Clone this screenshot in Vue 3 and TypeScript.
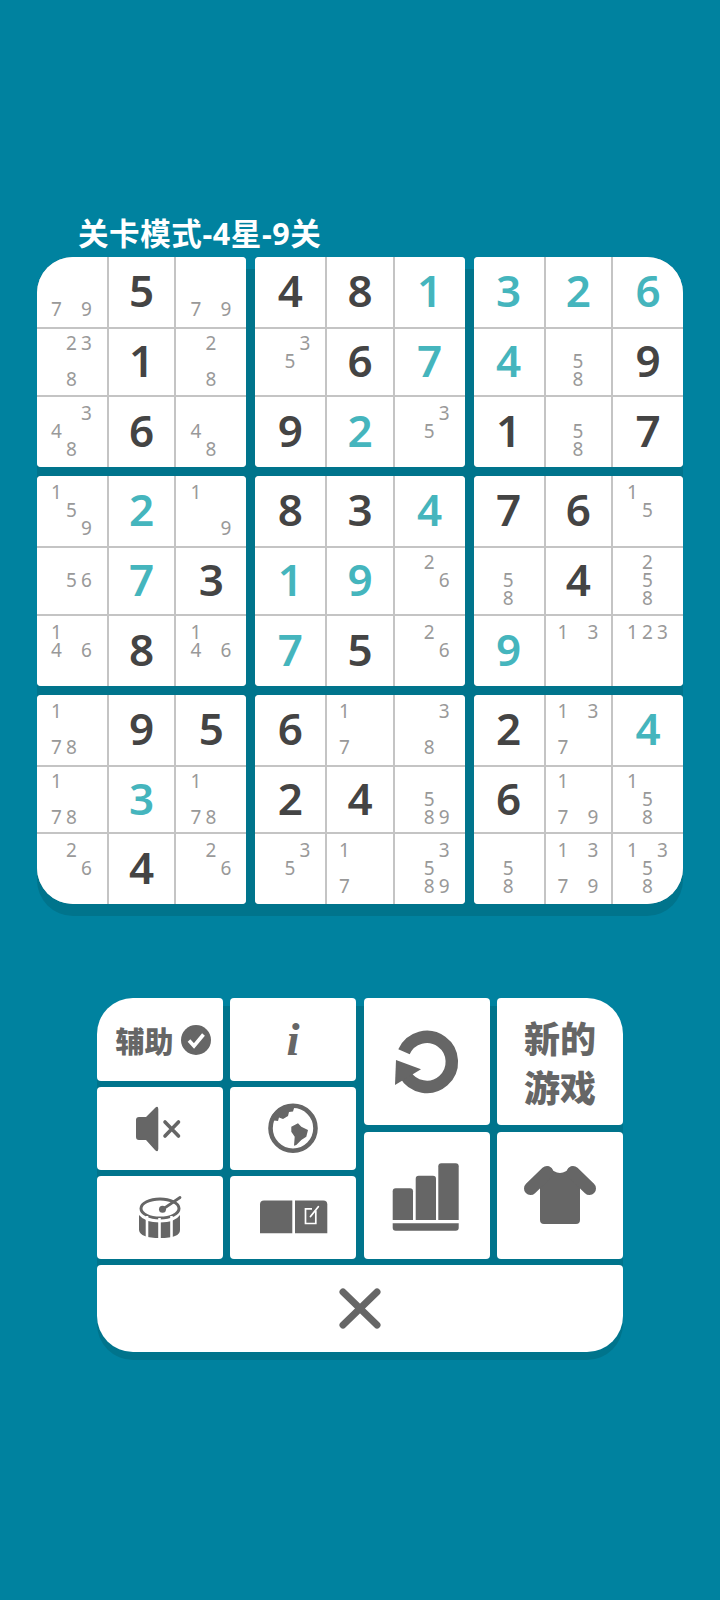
<script setup lang="ts">
const rows: string[] = [
  'n79 5 n79 4 8 t1 t3 t2 t6',
  'n238 1 n28 n35 6 t7 t4 n58 9',
  'n348 6 n48 9 t2 n35 1 n58 7',
  'n159 t2 n19 8 3 t4 7 6 n15',
  'n56 t7 3 t1 t9 n26 n58 4 n258',
  'n146 8 n146 t7 5 n26 t9 n13 n123',
  'n178 9 5 6 n17 n38 2 n137 t4',
  'n178 t3 n178 2 4 n589 6 n179 n158',
  'n26 4 n26 n35 n17 n3589 n58 n1379 n1358',
]
const grid: string[][] = rows.map((r) => r.split(' '))

interface Cell { kind: string; value: string; notes: (string | null)[] }

function parse(raw: string): Cell {
  if (raw[0] === 'n') {
    const notes: (string | null)[] = []
    for (let d = 1; d <= 9; d++) notes.push(raw.includes(String(d)) ? String(d) : null)
    return { kind: 'note', value: '', notes }
  }
  if (raw[0] === 't') return { kind: 'given', value: raw.slice(1), notes: [] }
  return { kind: 'solved', value: raw, notes: [] }
}

const blocks: Cell[][] = []
for (let br = 0; br < 3; br++) {
  for (let bc = 0; bc < 3; bc++) {
    const cells: Cell[] = []
    for (let r = 0; r < 3; r++) {
      for (let c = 0; c < 3; c++) cells.push(parse(grid[br * 3 + r][bc * 3 + c]))
    }
    blocks.push(cells)
  }
}
</script>

<template>
  <div class="page">
    <div class="title">关卡模式-4星-9关</div>
    <div class="board">
      <div v-for="(block, bi) in blocks" :key="bi" class="block" :class="'b' + bi">
        <div v-for="(cell, ci) in block" :key="ci" class="cell">
          <div v-if="cell.kind === 'note'" class="notes">
            <span v-for="(n, ni) in cell.notes" :key="ni" class="note">{{ n }}</span>
          </div>
          <span v-else class="digit" :class="cell.kind">{{ cell.value }}</span>
        </div>
      </div>
    </div>

    <div class="panel">
      <div class="top">
        <div class="small">
          <div class="btn tl assist">
            <span class="assist-label">辅助</span>
            <svg class="check" viewBox="0 0 30 30" width="30" height="30">
              <circle cx="15" cy="15" r="15" fill="#666" />
              <path d="M8 15.500 L13 21 L22.500 9.500" fill="none" stroke="#fff" stroke-width="3.600" />
            </svg>
          </div>
          <div class="btn"><span class="info">i</span></div>
          <div class="btn">
            <svg class="icon" viewBox="97 1087 126 83">
              <path d="M136 1120 Q136 1117 139 1117 H146 L155 1108 Q158 1105 158.300 1109 V1149 Q158 1153 155 1150 L146 1140 H139 Q136 1140 136 1137 Z" fill="#666" />
              <path d="M165 1122 L178.500 1136 M178.500 1122 L165 1136" stroke="#666" stroke-width="3.600" stroke-linecap="round" />
            </svg>
          </div>
          <div class="btn">
            <svg class="icon" viewBox="230 1087 126 83">
              <circle cx="293" cy="1128.300" r="22.500" fill="none" stroke="#666" stroke-width="4.600" />
              <path d="M270 1120 L278 1121 L279 1117.500 L283 1119 L288 1116 L289 1112 L293 1111.500 L295 1105 A23 23 0 0 0 270 1120 Z" fill="#666" />
              <path d="M291.300 1126.700 L298 1123.300 L301.300 1126.700 L308 1130 L306.300 1136.700 L301.300 1140 L296.300 1145 L294 1145.700 L294.700 1136.700 L291.300 1131.700 Z" fill="#666" />
            </svg>
          </div>
          <div class="btn">
            <svg class="icon" viewBox="97 1176 126 83">
              <ellipse cx="160" cy="1208.500" rx="19" ry="9.500" fill="none" stroke="#666" stroke-width="3" />
              <path d="M139 1215 V1230 Q140 1238 160 1238 Q180 1238 180 1230 V1215 Q175 1222.500 160 1222.500 Q145 1222.500 139 1215 Z" fill="#666" />
              <path d="M147 1216 V1240 M159.500 1218 V1240 M171.500 1216 V1240" stroke="#fff" stroke-width="2.600" />
              <path d="M162.500 1209.300 L180 1197.500" stroke="#666" stroke-width="2.800" stroke-linecap="round" />
              <circle cx="162.500" cy="1209.300" r="3.500" fill="#666" />
            </svg>
          </div>
          <div class="btn">
            <svg class="icon" viewBox="230 1176 126 83">
              <path d="M260 1204.500 Q260 1200.500 264 1200.500 H292.300 V1233.300 H260 Z" fill="#666" />
              <path d="M295 1200.500 H323.300 Q327.300 1200.500 327.300 1204.500 V1233.300 H295 Z" fill="#666" />
              <path d="M315.800 1210.500 V1223.500 H305.500 V1208.800 H312" fill="none" stroke="#fff" stroke-width="1.700" />
              <path d="M310.500 1216.500 L318.300 1206.700" stroke="#fff" stroke-width="1.800" stroke-linecap="round" />
            </svg>
          </div>
        </div>
        <div class="large">
          <div class="btn">
            <svg class="icon" viewBox="364 998 126 127">
              <path d="M404 1051.700 A25 25 0 1 1 405 1074" fill="none" stroke="#666" stroke-width="12.500" />
              <path d="M396 1060 L421 1069.300 L395 1085 Z" fill="#666" />
            </svg>
          </div>
          <div class="btn tr newgame">新的<br />游戏</div>
          <div class="btn">
            <svg class="icon" viewBox="364 1132 126 127">
              <path d="M392.700 1220 V1191.300 Q392.700 1188.300 395.700 1188.300 H410 Q413 1188.300 413 1191.300 V1220 Z" fill="#666" />
              <path d="M415.700 1220 V1178.700 Q415.700 1175.700 418.700 1175.700 H433 Q436 1175.700 436 1178.700 V1220 Z" fill="#666" />
              <path d="M438.300 1220 V1166.300 Q438.300 1163.300 441.300 1163.300 H455.700 Q458.700 1163.300 458.700 1166.300 V1220 Z" fill="#666" />
              <path d="M392.700 1223.300 H458.700 V1227.700 Q458.700 1230.700 455.700 1230.700 H395.700 Q392.700 1230.700 392.700 1227.700 Z" fill="#666" />
            </svg>
          </div>
          <div class="btn">
            <svg class="icon" viewBox="497 1132 126 127">
              <path d="M540 1220 V1175 L548 1166 Q560 1180 572 1166 L580 1175 V1220 Q580 1224 576 1224 H544 Q540 1224 540 1220 Z" fill="#666" />
              <path d="M530.500 1188.500 L547 1172.500 M589.500 1188.500 L573 1172.500" stroke="#666" stroke-width="13" stroke-linecap="round" />
            </svg>
          </div>
        </div>
      </div>
      <div class="btn close">
        <svg class="icon" viewBox="97 1265 526 87">
          <path d="M343 1292 L377 1325 M377 1292 L343 1325" stroke="#666" stroke-width="7" stroke-linecap="round" />
        </svg>
      </div>
    </div>
  </div>
</template>

<style>
html,
body {
  margin: 0;
  background: #00829f;
}
</style>

<style scoped>
.page {
  width: 720px;
  height: 1600px;
  box-sizing: border-box;
  padding-top: 217px;
  display: flex;
  flex-direction: column;
  align-items: center;
  background: #00829f;
  font-family: "Noto Sans", "Noto Sans CJK SC", sans-serif;
  overflow: hidden;
}
.title {
  align-self: flex-start;
  margin-left: 78px;
  height: 32px;
  line-height: 32px;
  margin-bottom: 8px;
  font-size: 30.500px;
  letter-spacing: 0.600px;
  font-weight: 700;
  color: #fff;
  white-space: nowrap;
}
.board {
  width: 646px;
  display: grid;
  grid-template-columns: repeat(3, 1fr);
  grid-template-rows: 210px 210px 209px;
  gap: 9px;
  border-radius: 36px;
  background: linear-gradient(transparent 12px, #00748c 12px);
  box-shadow: 0 12px 0 #00748c;
}
.block {
  display: grid;
  grid-template-columns: 70px 1fr 70px;
  grid-template-rows: 70px 1fr 70px;
  gap: 2px;
  background: #c4c4c4;
  border-radius: 4px;
  overflow: hidden;
}
.b0 { border-top-left-radius: 36px; }
.b2 { border-top-right-radius: 36px; }
.b6 { border-bottom-left-radius: 36px; }
.b8 { border-bottom-right-radius: 36px; }
.cell {
  background: #fff;
  display: flex;
  align-items: center;
  justify-content: center;
  min-width: 0;
  min-height: 0;
}
.digit {
  font-size: 44px;
  font-weight: 600;
  line-height: 1;
  margin-top: -4px;
}
.solved { color: #444; }
.given { color: #45b5bd; }
.notes {
  display: grid;
  grid-template-columns: repeat(3, 15px);
  grid-template-rows: repeat(3, 18px);
  margin-left: -1px;
  margin-top: -2px;
}
.note {
  font-size: 19px;
  line-height: 18px;
  text-align: center;
  color: #999;
}
.panel {
  width: 526px;
  margin-top: 94px;
  display: flex;
  flex-direction: column;
  gap: 6px;
  border-radius: 36px;
  background: linear-gradient(transparent 8px, #00748c 8px);
  box-shadow: 0 8px 0 #00748c;
}
.top {
  display: flex;
  gap: 8px;
}
.small {
  display: grid;
  grid-template-columns: 126px 126px;
  grid-template-rows: repeat(3, 83px);
  gap: 6px 7px;
}
.large {
  display: grid;
  grid-template-columns: 126px 126px;
  grid-template-rows: 127px 127px;
  gap: 7px;
}
.btn {
  background: #fff;
  border-radius: 4px;
  display: flex;
  align-items: center;
  justify-content: center;
  color: #666;
  overflow: hidden;
  min-width: 0;
  min-height: 0;
}
.tl { border-top-left-radius: 36px; }
.tr { border-top-right-radius: 36px; }
.icon {
  width: 100%;
  height: 100%;
  display: block;
}
.assist {
  gap: 7px;
  padding-left: 6px;
  box-sizing: border-box;
}
.assist-label {
  font-size: 29px;
  font-weight: 900;
  font-family: "Noto Sans CJK SC", sans-serif;
}
.check {
  flex: none;
  display: block;
}
.info {
  font-family: "Liberation Serif", serif;
  font-style: italic;
  font-weight: 700;
  font-size: 47px;
  line-height: 1;
}
.newgame {
  font-family: "Noto Sans CJK SC", sans-serif;
  font-weight: 900;
  font-size: 36px;
  line-height: 49px;
  text-align: center;
}
.close {
  height: 87px;
  border-radius: 4px 4px 36px 36px;
}
</style>
